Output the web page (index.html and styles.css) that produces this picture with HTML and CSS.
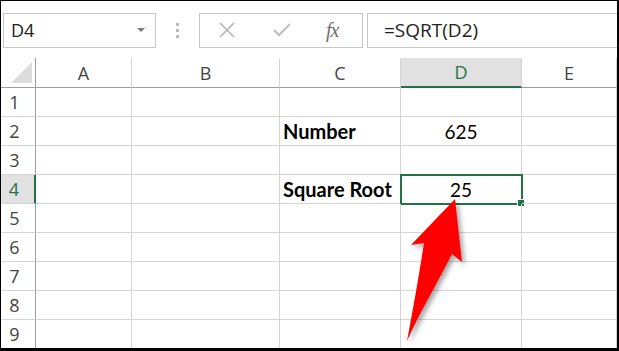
FILE: index.html
```html
<!DOCTYPE html>
<html lang="en">

<head>
  <meta charset="UTF-8" />
  <meta name="viewport" content="width=device-width, initial-scale=1.0" />
  <title>Square Root</title>
  <link rel="stylesheet" href="styles.css">
</head>

<body>
  <div class="frame">
    <div class="toolbar">
      <div class="name_box">
        <span>D4</span>
        <span class="drop"></span>
      </div>
      <div class="grip">
        <i></i><i></i><i></i>
      </div>
      <div class="btn_box">
        <svg class="tool" width="20" height="16" viewBox="0 0 20 16">
          <path d="M3 1 L17 15 M17 1 L3 15" stroke="#b4b4b4" stroke-width="1.6" fill="none" />
        </svg>
        <svg class="tool" width="20" height="16" viewBox="0 0 20 16">
          <path d="M2 8 L7 13 L18 2" stroke="#c4c4c4" stroke-width="2.4" fill="none" />
        </svg>
        <span class="fx">fx</span>
      </div>
      <div class="formula">=SQRT(D2)</div>
    </div>

    <div class="sheet">
      <div class="corner"><span></span></div>
      <div class="col_head">A</div>
      <div class="col_head">B</div>
      <div class="col_head">C</div>
      <div class="col_head selected">D</div>
      <div class="col_head">E</div>

      <div class="row_head">1</div>
      <div class="cell"></div><div class="cell"></div><div class="cell"></div><div class="cell"></div><div class="cell"></div>

      <div class="row_head">2</div>
      <div class="cell"></div><div class="cell"></div><div class="cell label">Number</div><div class="cell num">625</div><div class="cell"></div>

      <div class="row_head">3</div>
      <div class="cell"></div><div class="cell"></div><div class="cell"></div><div class="cell"></div><div class="cell"></div>

      <div class="row_head selected">4</div>
      <div class="cell"></div><div class="cell"></div><div class="cell label">Square Root</div><div class="cell num active">25</div><div class="cell"></div>

      <div class="row_head">5</div>
      <div class="cell"></div><div class="cell"></div><div class="cell"></div><div class="cell"></div><div class="cell"></div>

      <div class="row_head">6</div>
      <div class="cell"></div><div class="cell"></div><div class="cell"></div><div class="cell"></div><div class="cell"></div>

      <div class="row_head">7</div>
      <div class="cell"></div><div class="cell"></div><div class="cell"></div><div class="cell"></div><div class="cell"></div>

      <div class="row_head">8</div>
      <div class="cell"></div><div class="cell"></div><div class="cell"></div><div class="cell"></div><div class="cell"></div>

      <div class="row_head">9</div>
      <div class="cell"></div><div class="cell"></div><div class="cell"></div><div class="cell"></div><div class="cell"></div>

      <svg class="arrow" width="619" height="351" viewBox="0 0 619 351">
        <defs>
          <filter id="shadow" x="-20%" y="-20%" width="140%" height="140%">
            <feDropShadow dx="3" dy="3" stdDeviation="2.5" flood-color="#000" flood-opacity="0.35" />
          </filter>
        </defs>
        <path d="M455 199 L411 245 L424 243 C419 275 413 310 407 341 C420 312 438 282 452 254 L462 262 Z" fill="#ff0000" filter="url(#shadow)" />
      </svg>
    </div>
  </div>
</body>

</html>
```

FILE: styles.css
```css
body {
  margin: 0;
  padding: 0;
  background: #fff;
}

.frame {
  position: relative;
  width: 619px;
  height: 351px;
  box-sizing: border-box;
  border-style: solid;
  border-color: #000;
  border-width: 1px 2px 3px 1px;
  overflow: hidden;
  font-family: "Open Sans", "Noto Sans", sans-serif;
}

.toolbar {
  display: flex;
  align-items: center;
  height: 57px;
  padding-left: 2px;
  box-sizing: border-box;
  padding-top: 1px;
}

.name_box {
  display: flex;
  align-items: center;
  justify-content: space-between;
  width: 153px;
  height: 35px;
  box-sizing: border-box;
  border: 1px solid #c6c6c6;
  padding: 0 10px 0 7px;
  font-size: 18px;
  color: #222;
}

.drop {
  width: 0;
  height: 0;
  border-left: 4px solid transparent;
  border-right: 4px solid transparent;
  border-top: 4px solid #7a7a7a;
}

.grip {
  display: flex;
  flex-direction: column;
  gap: 3px;
  margin: 0 20px;
}

.grip i {
  display: block;
  width: 3px;
  height: 3px;
  background: #b9b9b9;
}

.btn_box {
  display: flex;
  align-items: center;
  width: 164px;
  height: 35px;
  box-sizing: border-box;
  border: 1px solid #c6c6c6;
  padding-left: 17px;
}

.tool {
  margin-right: 35px;
}

.btn_box .tool:nth-child(2) {
  margin-right: 34px;
}

.fx {
  font-family: "Liberation Serif", serif;
  font-style: italic;
  font-size: 20px;
  color: #6f6f6f;
  letter-spacing: -1px;
}

.formula {
  flex: 1;
  height: 35px;
  box-sizing: border-box;
  border: 1px solid #c6c6c6;
  border-right: none;
  margin-left: 4px;
  padding-left: 16px;
  line-height: 33px;
  font-size: 19px;
  color: #222;
}

.sheet {
  position: relative;
  display: grid;
  grid-template-columns: 35px 96px 148px 121px 121px 1fr;
  grid-template-rows: 30px repeat(9, 29px);
}

.corner {
  position: relative;
  border-right: 1px solid #9e9e9e;
  border-bottom: 1px solid #9e9e9e;
}

.corner span {
  position: absolute;
  right: 3px;
  bottom: 4px;
  width: 0;
  height: 0;
  border-left: 21px solid transparent;
  border-bottom: 21px solid #dcdcdc;
}

.col_head {
  display: flex;
  align-items: center;
  justify-content: center;
  border-right: 1px solid #d4d4d4;
  border-bottom: 1px solid #9e9e9e;
  font-size: 18px;
  color: #444;
}

.col_head.selected {
  background: #e1e1e1;
  border-bottom: 2px solid #217346;
  color: #217346;
}

.row_head {
  display: flex;
  align-items: center;
  justify-content: center;
  padding-right: 7px;
  border-right: 1px solid #9e9e9e;
  border-bottom: 1px solid #d4d4d4;
  font-size: 18px;
  color: #444;
}

.row_head.selected {
  background: #e1e1e1;
  border-right: 2px solid #217346;
  color: #217346;
}

.cell {
  position: relative;
  display: flex;
  align-items: center;
  border-right: 1px solid #d4d4d4;
  border-bottom: 1px solid #d4d4d4;
  font-family: "Lato", "Liberation Sans", sans-serif;
  font-size: 19px;
  color: #000;
  white-space: nowrap;
}

.label {
  font-weight: bold;
  font-size: 20px;
  padding-left: 3px;
}

.num {
  justify-content: center;
}

.cell.active {
  outline: 2px solid #217346;
  outline-offset: -1px;
}

.cell.active::after {
  content: "";
  position: absolute;
  right: -4px;
  bottom: -4px;
  width: 6px;
  height: 6px;
  background: #217346;
  border: 1px solid #fff;
}

.arrow {
  position: absolute;
  left: -1px;
  top: -58px;
  pointer-events: none;
}
```
